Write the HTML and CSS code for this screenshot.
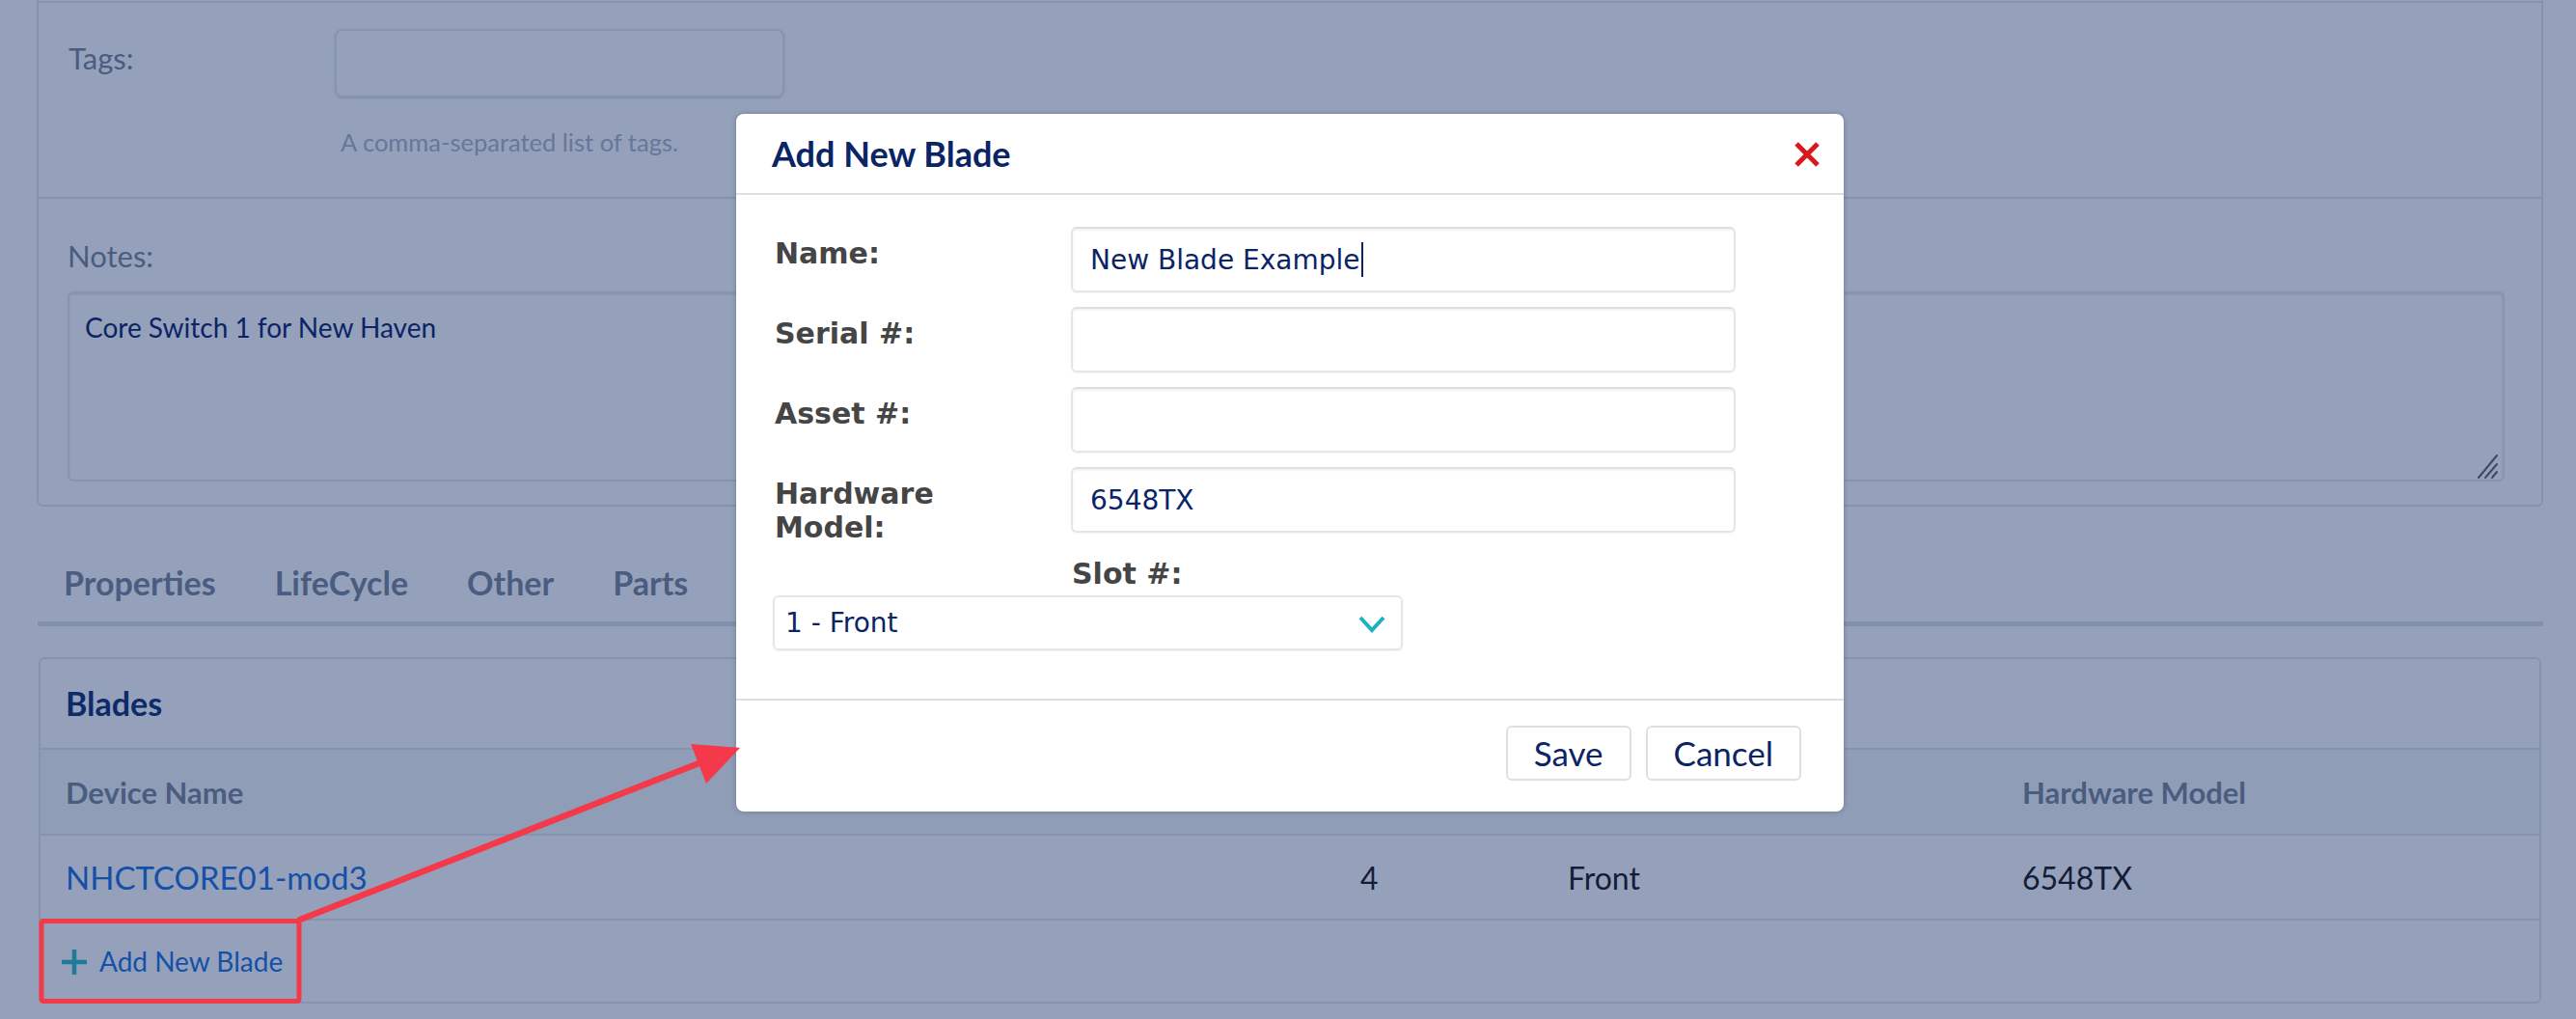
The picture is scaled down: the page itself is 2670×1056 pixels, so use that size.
FILE: index.html
```html
<!DOCTYPE html>
<html lang="en">
<head>
<meta charset="utf-8">
<title>Add New Blade</title>
<link rel="stylesheet" href="styles.css">
</head>
<body>
<div class="page">
  <section class="card form-card">
    <div class="card-cap"></div>
    <div class="tags-row">
      <div class="field-label tags-label">Tags:</div>
      <div class="tags-field">
        <div class="tags-input"></div>
        <div class="help">A comma-separated list of tags.</div>
      </div>
    </div>
    <div class="notes-row">
      <div class="field-label notes-label">Notes:</div>
      <div class="textarea">Core Switch 1 for New Haven
        <svg class="grip" width="24" height="26" viewBox="0 0 24 26"><path d="M2 25 L21 2 M9 25 L21 11 M16 25 L21 19" stroke="#3d4866" stroke-width="2" fill="none" stroke-linecap="round"/></svg>
      </div>
    </div>
  </section>

  <nav class="tabs">
    <span class="tab">Properties</span>
    <span class="tab">LifeCycle</span>
    <span class="tab">Other</span>
    <span class="tab">Parts</span>
  </nav>

  <section class="card blades-card">
    <div class="blades-head">Blades</div>
    <div class="trow thead">
      <div>Device Name</div><div></div><div></div><div>Hardware Model</div>
    </div>
    <div class="trow tbody">
      <a class="dev-link">NHCTCORE01-mod3</a><div>4</div><div>Front</div><div>6548TX</div>
    </div>
    <div class="add-row">
      <svg class="plus" width="28" height="28" viewBox="0 0 28 28"><path d="M14 1 V27 M1 14 H27" stroke="#1f7b97" stroke-width="4.5" fill="none"/></svg>
      <span class="add-text">Add New Blade</span>
    </div>
  </section>
</div>

<svg class="annotation" width="2670" height="1056" viewBox="0 0 2670 1056">
  <rect x="43" y="954.5" width="267" height="83" rx="2" fill="none" stroke="#f43a4a" stroke-width="5"/>
  <path d="M311 953 L727 790" stroke="#f43a4a" stroke-width="6.5" stroke-linecap="round" fill="none"/>
  <polygon points="716,771 767,775 732,812" fill="#f43a4a"/>
</svg>

<div class="modal">
  <div class="modal-head">
    <h2 class="modal-title">Add New Blade</h2>
    <svg class="close" width="28" height="28" viewBox="0 0 28 28"><path d="M3 3 L25 25 M25 3 L3 25" stroke="#d7191f" stroke-width="5" fill="none"/></svg>
  </div>
  <div class="modal-body">
    <div class="m-row">
      <div class="m-label">Name:</div>
      <div class="m-input">New Blade Example<span class="caret"></span></div>
    </div>
    <div class="m-row">
      <div class="m-label">Serial #:</div>
      <div class="m-input"></div>
    </div>
    <div class="m-row">
      <div class="m-label">Asset #:</div>
      <div class="m-input"></div>
    </div>
    <div class="m-row m-row-last">
      <div class="m-label">Hardware Model:</div>
      <div class="m-input">6548TX</div>
    </div>
    <div class="slot-label">Slot #:</div>
    <div class="m-select">
      <span>1 - Front</span>
      <svg class="chev" width="28" height="18" viewBox="0 0 28 18"><path d="M2 2 L14 15 L26 2" stroke="#1cb2c4" stroke-width="4" fill="none"/></svg>
    </div>
  </div>
  <div class="modal-foot">
    <button class="btn">Save</button>
    <button class="btn">Cancel</button>
  </div>
</div>
</body>
</html>
```

FILE: styles.css
```css
html, body {
  margin: 0;
  padding: 0;
}
body {
  width: 2670px;
  height: 1056px;
  overflow: hidden;
  background: #95a1ba;
  font-family: "Lato", "Liberation Sans", sans-serif;
  position: relative;
}
.page {
  padding: 0 34px 0 38px;
}
.card {
  border: 2px solid #8592b0;
  border-radius: 6px;
  box-sizing: border-box;
}
.form-card {
  margin-top: -20px;
}
.card-cap {
  height: 19px;
  border-bottom: 2px solid #8592b0;
}
.tags-row {
  display: flex;
  height: 203px;
  box-sizing: border-box;
  padding: 27px 0 0 31px;
  border-bottom: 2px solid #8592b0;
}
.field-label {
  font-size: 31px;
  line-height: 40px;
  color: #4c5c7e;
}
.tags-label {
  width: 276px;
  padding-top: 10px;
}
.tags-input {
  width: 466px;
  height: 71px;
  box-sizing: border-box;
  border: 2px solid #8794b1;
  border-radius: 8px;
  box-shadow: 0 1px 2px rgba(60, 75, 110, 0.25);
}
.help {
  margin-top: 31px;
  padding-left: 6px;
  font-size: 25.5px;
  line-height: 30px;
  color: #66779a;
}
.notes-row {
  padding: 39px 38px 24px 30px;
}
.notes-label {
  margin-bottom: 17px;
}
.textarea {
  position: relative;
  height: 197px;
  box-sizing: border-box;
  border: 2px solid #8794b1;
  border-radius: 6px;
  padding: 15px 16px;
  font-size: 28px;
  line-height: 40px;
  color: #0b2466;
  box-shadow: inset 0 1px 2px rgba(60, 75, 110, 0.2);
}
.grip {
  position: absolute;
  right: 3px;
  bottom: 1px;
}
.tabs {
  display: flex;
  gap: 61px;
  margin: 59px 0 0 1px;
  padding: 0 0 20px 27px;
  border-bottom: 5px solid #8290ad;
}
.tab {
  font-weight: 700;
  font-size: 34px;
  line-height: 40px;
  color: #4a5d80;
}
.blades-card {
  margin: 32px 2px 0 2px;
}
.blades-head {
  height: 92px;
  line-height: 92px;
  padding-left: 26px;
  font-weight: 700;
  font-size: 34px;
  color: #0d2a6b;
  border-bottom: 2px solid #8592b0;
}
.trow {
  display: grid;
  grid-template-columns: 1342px 215px 471px 1fr;
  padding-left: 26px;
  align-items: center;
  border-bottom: 2px solid #8592b0;
}
.thead {
  height: 87px;
  font-weight: 700;
  font-size: 31px;
  color: #4a5d80;
  background: #909db7;
}
.tbody {
  height: 86px;
  font-size: 32px;
  color: #141d38;
}
.dev-link {
  color: #1450a8;
  font-size: 33px;
}
.add-row {
  height: 84px;
  display: flex;
  align-items: center;
  padding-left: 21px;
  gap: 12px;
}
.plus {
  margin-top: 2px;
}
.add-text {
  font-size: 28px;
  color: #1450a8;
}
.annotation {
  position: absolute;
  left: 0;
  top: 0;
  pointer-events: none;
  z-index: 5;
}
.modal {
  position: absolute;
  left: 763px;
  top: 118px;
  width: 1148px;
  height: 723px;
  background: #ffffff;
  border-radius: 8px;
  box-shadow: 0 0 5px rgba(40, 50, 70, 0.35);
  z-index: 4;
}
.modal-head {
  height: 82px;
  display: flex;
  align-items: center;
  justify-content: space-between;
  padding: 0 24px 0 37px;
  border-bottom: 2px solid #dde1e6;
  box-sizing: content-box;
}
.modal-title {
  margin: 0;
  font-size: 36px;
  font-weight: 700;
  color: #0a2466;
}
.close {
  margin-top: 2px;
}
.modal-body {
  padding: 33px 40px 50px 40px;
}
.m-row {
  display: flex;
  margin-bottom: 15px;
}
.m-row-last {
  margin-bottom: 13px;
}
.m-label,
.slot-label {
  font-family: "DejaVu Sans", Verdana, sans-serif;
  font-weight: 700;
  font-size: 30px;
  line-height: 35px;
  color: #454545;
}
.m-label {
  width: 270px;
  margin-right: 37px;
  padding-top: 10px;
}
.m-input {
  width: 689px;
  height: 68px;
  box-sizing: border-box;
  border: 2px solid #e3e6ea;
  border-top-color: #dcdfe3;
  border-radius: 6px;
  box-shadow: inset 0 2px 2px rgba(0, 0, 0, 0.05), 0 1px 1px rgba(0, 0, 0, 0.04);
  padding: 0 18px;
  display: flex;
  align-items: center;
  font-family: "DejaVu Sans", Verdana, sans-serif;
  font-size: 28px;
  color: #0a2466;
}
.caret {
  display: inline-block;
  width: 2px;
  height: 36px;
  background: #0a2466;
  margin-left: 1px;
}
.slot-label {
  margin-left: 308px;
}
.m-select {
  margin: 5px 0 0 -2px;
  width: 653px;
  height: 57px;
  box-sizing: border-box;
  border: 2px solid #e3e6ea;
  border-radius: 6px;
  box-shadow: 0 1px 2px rgba(0, 0, 0, 0.06);
  padding: 0 16px 0 11px;
  display: flex;
  align-items: center;
  justify-content: space-between;
  font-family: "DejaVu Sans", Verdana, sans-serif;
  font-size: 28px;
  color: #0a2466;
}
.chev {
  margin-top: 2px;
}
.modal-foot {
  border-top: 2px solid #dde1e6;
  padding: 26px 44px 32px 0;
  display: flex;
  justify-content: flex-end;
  gap: 15px;
}
.btn {
  height: 57px;
  padding: 0 27px;
  background: #ffffff;
  border: 2px solid #dde1e6;
  border-radius: 6px;
  font-family: "Lato", "Liberation Sans", sans-serif;
  font-size: 35px;
  color: #0a2466;
  line-height: 1;
}
```
